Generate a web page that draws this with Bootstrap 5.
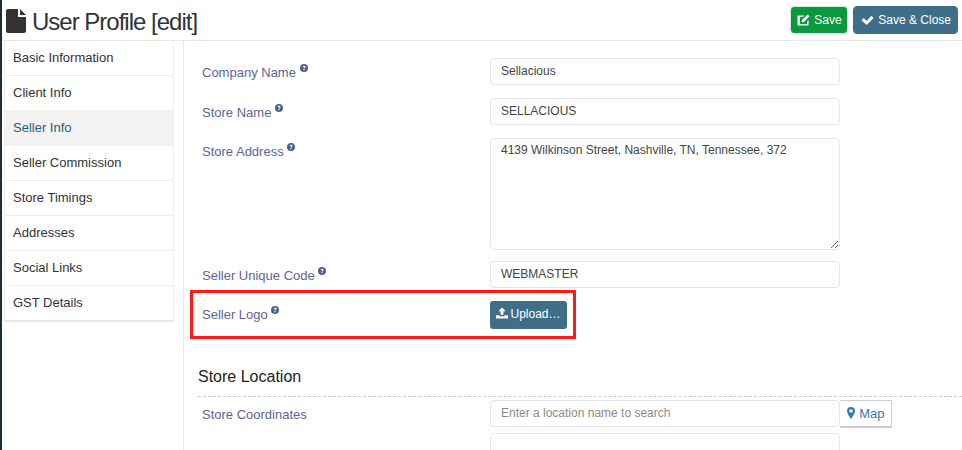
<!DOCTYPE html>
<html lang="en"><head><meta charset="utf-8"><title>User Profile</title>
<link href="https://cdn.jsdelivr.net/npm/bootstrap@5.3.0/dist/css/bootstrap.min.css" rel="stylesheet">
<style>
html,body{height:450px;overflow:hidden;background:#fff}
body{font-family:"Liberation Sans",Arial,sans-serif;font-size:13px;color:#333}
.shell{height:450px;border-left:2px solid #1f2d38}
.page-top{height:41px;border-bottom:1px solid #e8e8e8;padding:0 4px 0 4px}
.page-name{font-size:24px;line-height:32px;margin:3px 0 0;color:#333;letter-spacing:-1px;font-weight:400}
.page-name svg{margin-right:6px;vertical-align:-3px}
.act{font-size:12px;line-height:16px;color:#fff;border-radius:4px;padding:5px 7px;height:28px;font-weight:400}
.act:hover{color:#fff}
.act svg{vertical-align:-2px;margin-right:1px}
.act-green{background:#0a9a3d;border:1px solid #d6e8da;width:58px;white-space:nowrap;margin-right:5px;padding-left:6px;padding-right:0}
.act-teal{background:#3f6f88;border:1px solid #3f6f88;width:105px;white-space:nowrap;padding-right:0}
.main-area{height:409px;overflow:hidden}
.side{width:170px;margin:0 9px 0 2px;align-self:flex-start;border:1px solid #eee;border-bottom:2px solid #e8e8e8;border-top:0}
.side-link{display:block;height:35px;line-height:34px;padding:0 8px;font-size:13px;color:#333;text-decoration:none;border-bottom:1px solid #eee;background:#fff}
.side-link:last-child{border-bottom:0;height:34px}
.side-link.on{background:#f2f2f2;color:#1d5f82}
.panel{border-left:1px solid #e8e8e8;padding:17px 0 0 14px;flex:1;min-width:0}
.f-row{display:flex;width:702px;padding-left:4px}
.f-label{width:288px;color:#5b6597;font-size:13px;padding-top:6px;line-height:17px;flex:none}
.f-label svg{vertical-align:5px}
.f-input{width:350px;height:27px;border:1px solid #e3e4ee;border-radius:4px;font-size:12px;padding:0 10px 2px;color:#444;box-shadow:none;line-height:23px}
.f-input:focus{box-shadow:none;border-color:#e3e4ee}
.f-input::placeholder{color:#8a8a8a;opacity:1}
textarea.f-input{height:112px;line-height:17px;padding:3px 10px;display:block;min-height:0}
.addr-label{padding-top:5px}
.gap13{margin-bottom:13px}
.addr-row{margin-bottom:11px}
.logo-box{width:386px;height:49px;border:3px solid #ff1a1a;margin:2px 0 0 -8px;display:flex;align-items:center;padding-left:9px}
.logo-box .f-label{width:288px;padding-top:0;margin-top:-1px}
.up-btn{background:#3f6f88;color:#fff;border:0;border-radius:3px;font-size:12px;width:77px;height:28px;padding:0 0 1px;line-height:25px;margin-top:1px}
.up-btn:hover{color:#fff;background:#3f6f88}
.up-btn svg{vertical-align:-1px;margin-right:2px}
.sect{font-size:16px;line-height:20px;color:#222;font-weight:400;margin:28px 0 0;height:30px;border-bottom:1px dashed #c9c9c9;width:764px}
.loc{padding-top:3px}
.loc .f-label{padding-top:6px}
.map-btn{width:52px;height:28px;border:1px solid #ccc;border-left:0;border-bottom-width:2px;color:#337ab7;font-size:13px;line-height:25px;text-align:center;text-decoration:none;display:block;background:#fff}
.map-btn svg{vertical-align:-1px;margin-right:1px}
.next{margin-top:5px;height:40px}
</style></head><body>
<svg width="0" height="0" class="position-absolute"><defs>
<symbol id="q" viewBox="0 0 16 16"><circle cx="8" cy="8" r="8" fill="#4a5f8c"/><path d="M5 6.200c0-1.700 1.300-2.900 3.100-2.900s3 1.100 3 2.600c0 1.900-2.100 2-2.100 3.300H6.900c0-2.300 2-2.300 2-3.200 0-.4-.4-.8-.9-.8-.6 0-.9.4-1 1zM6.900 10.200h2.100v2.200H6.900z" fill="#fff"/></symbol>
</defs></svg>
<div class="shell d-flex flex-column">
 <div class="page-top d-flex justify-content-between align-items-center">
  <h1 class="page-name"><svg width="20" height="24" viewBox="0 0 20 24"><path d="M0 2a2 2 0 0 1 2-2h10v8h8v14a2 2 0 0 1-2 2H2a2 2 0 0 1-2-2zM14 0l6 6h-6z" fill="#333"/></svg>User Profile [edit]</h1>
  <div class="d-flex ms-auto">
   <a href="#" class="btn act act-green text-start"><svg width="13" height="12" viewBox="0 0 14 13"><path d="M1.500 1.500H8L6.600 3H3v8h8V8l1.500-1.400v4.900a1 1 0 0 1-1 1h-10a1 1 0 0 1-1-1v-9a1 1 0 0 1 1-1zM11.500.5l2 2L7.500 8.600 5 9l.4-2.500z" fill="#fff"/></svg> Save</a>
   <a href="#" class="btn act act-teal text-start"><svg width="13" height="12" viewBox="0 0 13 12"><path d="M.6 6.200l2.200-2.200 2.900 2.900L10.400 1.800l2.200 2.200-6.900 7z" fill="#fff"/></svg> Save &amp; Close</a>
  </div>
 </div>
 <div class="main-area d-flex">
  <nav class="side">
   <a class="side-link" href="#">Basic Information</a>
   <a class="side-link" href="#">Client Info</a>
   <a class="side-link on" href="#">Seller Info</a>
   <a class="side-link" href="#">Seller Commission</a>
   <a class="side-link" href="#">Store Timings</a>
   <a class="side-link" href="#">Addresses</a>
   <a class="side-link" href="#">Social Links</a>
   <a class="side-link" href="#">GST Details</a>
  </nav>
  <div class="panel">
   <div class="f-row gap13"><label class="f-label">Company Name <svg width="8" height="8"><use href="#q"/></svg></label><input class="form-control f-input" value="Sellacious"></div>
   <div class="f-row gap13"><label class="f-label">Store Name <svg width="8" height="8"><use href="#q"/></svg></label><input class="form-control f-input" value="SELLACIOUS"></div>
   <div class="f-row addr-row"><label class="f-label addr-label">Store Address <svg width="8" height="8"><use href="#q"/></svg></label><textarea class="form-control f-input">4139 Wilkinson Street, Nashville, TN, Tennessee, 372</textarea></div>
   <div class="f-row"><label class="f-label">Seller Unique Code <svg width="8" height="8"><use href="#q"/></svg></label><input class="form-control f-input" value="WEBMASTER"></div>
   <div class="logo-box"><span class="f-label">Seller Logo <svg width="8" height="8"><use href="#q"/></svg></span><button class="btn up-btn"><svg width="12" height="12" viewBox="0 0 13 12"><path d="M6.500 0l4 4H8v4H5V4H2.500zM0 8.500h3.800v1h5.400v-1H13V12H0z" fill="#fff"/></svg>Upload…</button></div>
   <h2 class="sect">Store Location</h2>
   <div class="f-row loc"><label class="f-label">Store Coordinates</label><input class="form-control f-input" placeholder="Enter a location name to search"><a class="map-btn" href="#"><svg width="8" height="12" viewBox="0 0 8 12"><path fill-rule="evenodd" d="M4 0a4 4 0 0 1 4 4c0 2-2.500 6-4 8C2.500 10 0 6 0 4a4 4 0 0 1 4-4zm0 2.300a1.700 1.700 0 1 0 0 3.400 1.700 1.700 0 0 0 0-3.400z" fill="#337ab7"/></svg> Map</a></div>
   <div class="f-row next"><span class="f-label"></span><input class="form-control f-input" aria-label="Location"></div>
  </div>
 </div>
</div>
</body></html>
